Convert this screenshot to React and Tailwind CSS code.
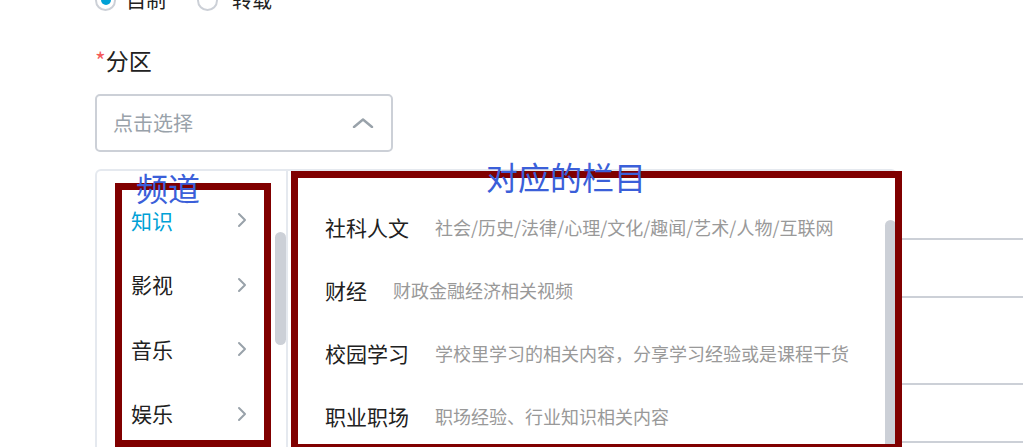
import { ChevronRight } from 'lucide-react';

const channels = ['知识', '影视', '音乐', '娱乐'];

const columns = [
  { name: '社科人文', desc: '社会/历史/法律/心理/文化/趣闻/艺术/人物/互联网' },
  { name: '财经', desc: '财政金融经济相关视频' },
  { name: '校园学习', desc: '学校里学习的相关内容，分享学习经验或是课程干货' },
  { name: '职业职场', desc: '职场经验、行业知识相关内容' },
];

function Chevron({ className }) {
  return (
    <svg viewBox="0 0 10 16" className={className} fill="none" stroke="currentColor" strokeWidth="2" strokeLinecap="round" strokeLinejoin="round">
      <path d="M2 2 L8 8 L2 14" />
    </svg>
  );
}

export default function App() {
  return (
    <div
      className="relative h-[447px] w-[1023px] overflow-hidden bg-white text-[#212121]"
      style={{ fontFamily: '"Noto Sans CJK SC", "Noto Sans", sans-serif' }}
    >
      {/* form column, scrolled so the radio row is cut off */}
      <div className="-mt-[11px] pl-[95px]">
        <div className="flex h-[22px] items-center text-[20px]">
          <span className="flex h-[21px] w-[21px] items-center justify-center rounded-full border-2 border-[#ccd0d7]">
            <span className="h-[10px] w-[10px] rounded-full bg-[#00a1d6]" />
          </span>
          <span className="ml-[10px] leading-none">自制</span>
          <span className="ml-[31px] h-[21px] w-[21px] rounded-full border-2 border-[#ccd0d7]" />
          <span className="ml-[14px] leading-none">转载</span>
        </div>

        <div className="mt-[34px] flex h-[30px] items-center text-[23px] leading-[30px]">
          <span className="text-[#f45a5a]">*</span>
          <span>分区</span>
        </div>

        <div className="mt-[19px] flex h-[58px] w-[298px] items-center justify-between rounded-[5px] border-2 border-[#ccd0d7] pl-[16px] pr-[17px]">
          <span className="text-[20px] text-[#99a2aa]">点击选择</span>
          <svg viewBox="0 0 22 10" className="h-[10px] w-[22px] text-[#99a2aa]" fill="none" stroke="currentColor" strokeWidth="2.4" strokeLinecap="round" strokeLinejoin="round">
            <path d="M2 9 L11 1.5 L20 9" />
          </svg>
        </div>

        <div className="mt-[86px] h-[60px] w-[1000px] rounded-[5px] border-2 border-[#ccd0d7]" />
        <div className="mt-[85px] h-[60px] w-[1000px] rounded-[5px] border-2 border-[#ccd0d7]" />
      </div>

      {/* cascader dropdown */}
      <div className="absolute left-[95px] top-[169px] flex h-[300px] w-[802px] rounded-t-[6px] border-2 border-b-0 border-[#e5e9ef] bg-white">
        <div className="relative w-[191px] shrink-0 border-r-2 border-[#e5e9ef] pl-[34px] pr-[39px] pt-[17px]">
          {channels.map((c, i) => (
            <div key={c} className="flex h-[64.5px] items-center justify-between">
              <span className={`text-[21px] ${i === 0 ? 'text-[#00a1d6]' : 'text-[#212121]'}`}>{c}</span>
              <Chevron className="h-[16px] w-[10px] text-[#99a2aa]" />
            </div>
          ))}
          <div className="absolute left-[178px] top-[61px] h-[113px] w-[11px] rounded-[6px] bg-[#ccd0d7]" />
        </div>
        <div className="relative flex-1 pl-[37px] pt-[25px]">
          {columns.map((c) => (
            <div key={c.name} className="flex h-[63px] items-center">
              <span className="text-[21px] text-[#212121]">{c.name}</span>
              <span className="ml-[26px] text-[18px] text-[#999999]">{c.desc}</span>
            </div>
          ))}
          <div className="absolute left-[597px] top-[49px] h-[300px] w-[11px] rounded-t-[6px] bg-[#ccd0d7]" />
        </div>
      </div>

      {/* annotations */}
      <div className="absolute left-[115px] top-[183px] h-[264px] w-[156px] border-[7px] border-[#800000]" />
      <div className="absolute left-[291px] top-[171px] h-[280px] w-[611px] border-[7px] border-[#800000]" />
      <span className="absolute left-[136px] top-[171px] text-[32px] leading-[32px] text-[#3b5fd9]">频道</span>
      <span className="absolute left-[486px] top-[160px] text-[32px] leading-[32px] text-[#3b5fd9]">对应的栏目</span>
    </div>
  );
}
